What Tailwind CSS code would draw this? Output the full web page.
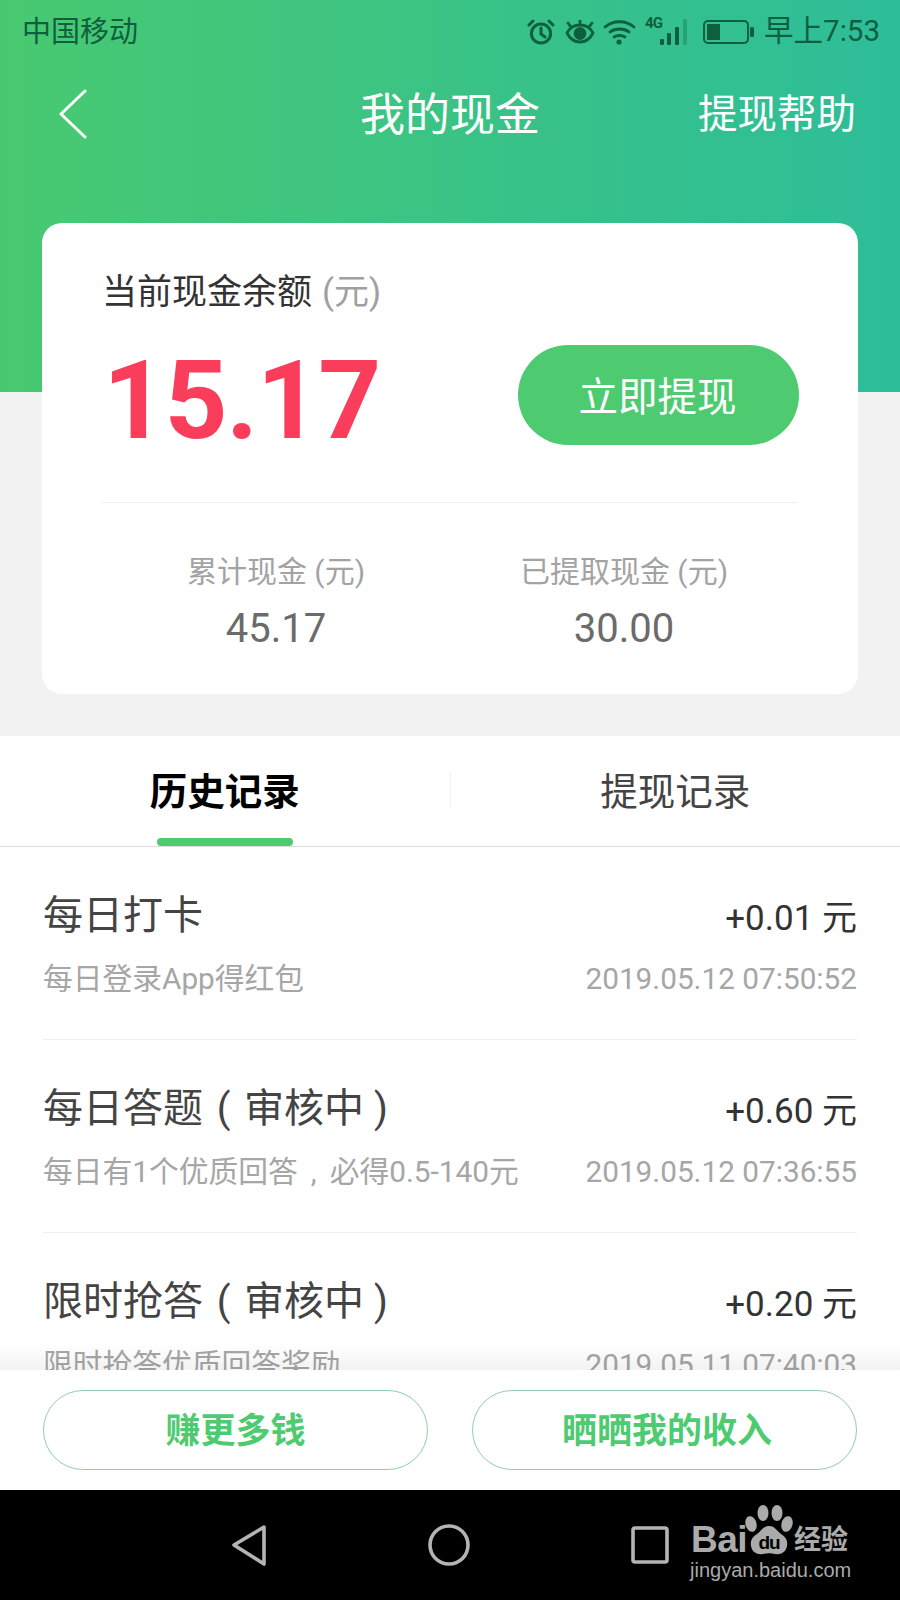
<!DOCTYPE html>
<html lang="zh-CN">
<head>
  <meta charset="UTF-8" />
  <meta name="viewport" content="width=device-width, initial-scale=1.0" />
  <title>我的现金</title>
  <script src="https://cdn.jsdelivr.net/npm/@tailwindcss/browser@4"></script>
</head>
<body class="bg-black">
  <div class="relative w-[900px] h-[1600px] overflow-hidden flex flex-col bg-[#f2f2f2] font-['Roboto','Noto_Sans_CJK_SC',sans-serif]">

    <!-- Status bar + title bar -->
    <header class="h-[392px] shrink-0 bg-linear-to-r/srgb from-[#48c971] to-[#2dbd99]">
      <div class="h-[64px] pl-[22px] pr-[20px] flex items-center justify-between text-[#0e5f3d]">
        <span class="text-[29px] leading-none">中国移动</span>
        <div class="flex items-center">
          <!-- alarm -->
          <svg class="w-[28px] h-[26px]" viewBox="0 0 28 26" fill="none" stroke="currentColor" stroke-width="3" stroke-linecap="round">
            <circle cx="14" cy="14.5" r="9.6" />
            <path d="M14 9v6l4 3M2 6l4-4M26 6l-4-4" />
          </svg>
          <!-- eye -->
          <svg class="w-[30px] h-[24px] ml-[10px]" viewBox="0 0 30 24" fill="none" stroke="currentColor" stroke-width="2.8" stroke-linecap="round">
            <path d="M2 13c3-6 8-8 13-8s10 2 13 8c-3 6-8 9-13 9S5 19 2 13z" />
            <circle cx="15" cy="13.5" r="5" fill="currentColor" />
            <path d="M3 3l3 4M27 3l-3 4M15 0v3" />
          </svg>
          <!-- wifi -->
          <svg class="w-[33px] h-[26px] ml-[8px]" viewBox="0 0 33 26" fill="none" stroke="currentColor" stroke-width="2.8" stroke-linecap="round">
            <path d="M2 8c8-7 21-7 29 0M7 13c5-4 14-4 19 0M11 18c3-2 8-2 11 0" />
            <circle cx="16" cy="23" r="2.6" fill="currentColor" stroke="none" />
          </svg>
          <!-- 4G + signal -->
          <div class="relative w-[46px] h-[28px] ml-[9px]">
            <span class="absolute left-0 -top-[2px] text-[15px] leading-none font-bold tracking-[-1px]">4G</span>
            <svg class="absolute left-[15px] top-0 w-[31px] h-[28px]" viewBox="0 0 31 28" fill="currentColor">
              <rect x="0" y="21" width="4" height="6" rx="1" />
              <rect x="7" y="15" width="4" height="12" rx="1" />
              <rect x="15" y="9" width="4" height="18" rx="1" />
              <rect x="23" y="1" width="4" height="26" rx="1" opacity="0.3" />
            </svg>
          </div>
          <!-- battery -->
          <svg class="w-[51px] h-[24px] ml-[12px]" viewBox="0 0 51 24" fill="none" stroke="currentColor">
            <rect x="1" y="1" width="44" height="22" rx="4" stroke-width="2" />
            <rect x="4" y="4" width="13" height="16" fill="currentColor" stroke="none" />
            <rect x="47" y="7" width="4" height="10" rx="1.5" fill="currentColor" stroke="none" />
          </svg>
          <span class="ml-[10px] text-[29.5px] leading-none">早上7:53</span>
        </div>
      </div>
      <div class="relative h-[72px] mt-[15px] flex items-center justify-center text-white">
        <svg class="absolute left-[58px] top-[10px] w-[30px] h-[50px]" viewBox="0 0 30 50" fill="none" stroke="currentColor" stroke-width="3" stroke-linecap="round" stroke-linejoin="round">
          <path d="M27 2L3 25l24 23" />
        </svg>
        <h1 class="text-[45px] leading-none font-normal">我的现金</h1>
        <span class="absolute right-[44px] top-[16px] text-[39.5px] leading-none">提现帮助</span>
      </div>
    </header>

    <!-- Balance card -->
    <section class="relative shrink-0 mx-[42px] -mt-[169px] h-[471px] bg-white rounded-[20px] px-[60px] pt-[49px]">
      <div class="h-[40px] flex items-center text-[35px] leading-none text-[#333]">
        当前现金余额<span class="ml-[10px] text-[#a0a0a0]">(元)</span>
      </div>
      <div class="mt-[33px] h-[100px] flex items-center justify-between">
        <span class="ml-[1px] mt-[12px] text-[110px] leading-none font-bold tracking-[-1.5px] text-[#fb3d5c]">15.17</span>
        <button class="w-[281px] h-[100px] -mr-[1px] pt-[5px] pr-[2px] rounded-[50px] bg-[#4ecb71] text-white text-[39.5px] leading-none">立即提现</button>
      </div>
      <div class="mt-[57px] h-px bg-[#f0f0f0]"></div>
      <div class="mt-[49px] flex text-center">
        <div class="w-[349px]">
          <div class="text-[30px] leading-[40px] text-[#a3a3a3]">累计现金 (元)</div>
          <div class="mt-[17px] text-[40px] leading-[40px] text-[#6b6b6b]">45.17</div>
        </div>
        <div class="w-[349px]">
          <div class="text-[30px] leading-[40px] text-[#a3a3a3]">已提取现金 (元)</div>
          <div class="mt-[17px] text-[40px] leading-[40px] text-[#6b6b6b]">30.00</div>
        </div>
      </div>
    </section>

    <!-- Tabs -->
    <nav class="relative shrink-0 mt-[42px] h-[111px] bg-white border-b border-[#dedede] flex items-center">
      <div class="flex-1 text-center text-[37.5px] leading-none font-bold text-black pt-[4px]">历史记录</div>
      <div class="w-px h-[38px] bg-[#f2f2f2]"></div>
      <div class="flex-1 text-center text-[37.5px] leading-none text-[#444] pt-[4px]">提现记录</div>
      <div class="absolute left-[157px] bottom-0 w-[136px] h-[8px] rounded-[4px] bg-[#4ecb71]"></div>
    </nav>

    <!-- History list, cut off by the bottom bar -->
    <main class="relative flex-1 min-h-0 overflow-hidden bg-white px-[43px]">
      <div class="h-[193px] border-b border-[#efefef] pt-[49px]">
        <div class="flex items-center justify-between h-[40px]">
          <span class="text-[40px] leading-none text-[#444]">每日打卡</span>
          <span class="pt-[4px] text-[35px] leading-none text-[#333]">+0.01 元</span>
        </div>
        <div class="mt-[23px] flex items-center justify-between h-[40px] text-[29.75px] leading-none text-[#a6a6a6]">
          <span>每日登录App得红包</span>
          <span>2019.05.12 07:50:52</span>
        </div>
      </div>
      <div class="h-[193px] border-b border-[#efefef] pt-[49px]">
        <div class="flex items-center justify-between h-[40px]">
          <span class="text-[40px] leading-none text-[#444]">每日答题<span class="inline-block w-[41px] text-center">(</span>审核中<span class="inline-block w-[34px] text-center">)</span></span>
          <span class="pt-[4px] text-[35px] leading-none text-[#333]">+0.60 元</span>
        </div>
        <div class="mt-[23px] flex items-center justify-between h-[40px] text-[29.75px] leading-none text-[#a6a6a6]">
          <span>每日有1个优质回答<span class="inline-block w-[32px] text-center">,</span>必得0.5-140元</span>
          <span>2019.05.12 07:36:55</span>
        </div>
      </div>
      <div class="h-[193px] pt-[49px]">
        <div class="flex items-center justify-between h-[40px]">
          <span class="text-[40px] leading-none text-[#444]">限时抢答<span class="inline-block w-[41px] text-center">(</span>审核中<span class="inline-block w-[34px] text-center">)</span></span>
          <span class="pt-[4px] text-[35px] leading-none text-[#333]">+0.20 元</span>
        </div>
        <div class="mt-[23px] flex items-center justify-between h-[40px] text-[29.75px] leading-none text-[#a6a6a6]">
          <span>限时抢答优质回答奖励</span>
          <span>2019.05.11 07:40:03</span>
        </div>
      </div>
      <div class="absolute left-0 right-0 bottom-0 h-[26px] bg-gradient-to-b from-black/0 to-black/5"></div>
    </main>

    <!-- Bottom actions -->
    <div class="shrink-0 h-[120px] bg-white px-[43px] pt-[20px] flex justify-between">
      <button class="w-[385px] h-[80px] pt-[2px] rounded-[40px] border border-[#8fd0a6] text-[35px] leading-none font-bold text-[#4ecb71]">赚更多钱</button>
      <button class="w-[385px] h-[80px] pt-[2px] pl-[5px] rounded-[40px] border border-[#8fd0a6] text-[35px] leading-none font-bold text-[#4ecb71]">晒晒我的收入</button>
    </div>

    <!-- Android navigation bar -->
    <div class="shrink-0 h-[110px] bg-black flex justify-center gap-[161px] pt-[34px] text-[#b4b4b4]">
      <svg class="w-[36px] h-[42px]" viewBox="0 0 36 42" fill="none" stroke="currentColor" stroke-width="3.6" stroke-linejoin="round">
        <path d="M33 3L3 21l30 19z" />
      </svg>
      <svg class="w-[42px] h-[42px]" viewBox="0 0 42 42" fill="none" stroke="currentColor" stroke-width="3.6">
        <circle cx="21" cy="21" r="19" />
      </svg>
      <svg class="w-[38px] h-[38px] mt-[2px]" viewBox="0 0 38 38" fill="none" stroke="currentColor" stroke-width="3.6" stroke-linejoin="round">
        <rect x="2" y="2" width="34" height="34" rx="2" />
      </svg>
    </div>

    <!-- Baidu jingyan watermark -->
    <div class="absolute left-[690px] top-[1504px] w-[164px] h-[76px] text-[#ababab] font-['Liberation_Sans','Noto_Sans_CJK_SC',sans-serif]">
      <span class="absolute left-[1px] top-[17px] text-[37px] leading-[37px] font-bold tracking-[-0.5px]">Bai</span>
      <svg class="absolute left-[55px] top-0 w-[48px] h-[51px]" viewBox="0 0 48 51" fill="currentColor">
        <ellipse cx="18" cy="9" rx="5.5" ry="8" />
        <ellipse cx="32" cy="9" rx="5.5" ry="8" />
        <ellipse cx="6" cy="20" rx="5.5" ry="8" transform="rotate(-15 6 20)" />
        <ellipse cx="42" cy="20" rx="5.5" ry="8" transform="rotate(15 42 20)" />
        <path d="M24 22c6 0 8 5 12 8 5 3 7 7 6 12-1 6-6 9-12 8-4-1-8-1-12 0-6 1-11-2-12-8-1-5 1-9 6-12 4-3 6-8 12-8z" />
      </svg>
      <span class="absolute left-[64px] top-[29px] w-[30px] text-center text-[19px] leading-[19px] font-bold text-black tracking-[-1px]">du</span>
      <span class="absolute left-[104px] top-[23px] text-[27px] leading-[27px] font-bold">经验</span>
      <span class="absolute left-0 top-[56px] text-[20px] leading-[20px]">jingyan.baidu.com</span>
    </div>
  </div>
</body>
</html>
